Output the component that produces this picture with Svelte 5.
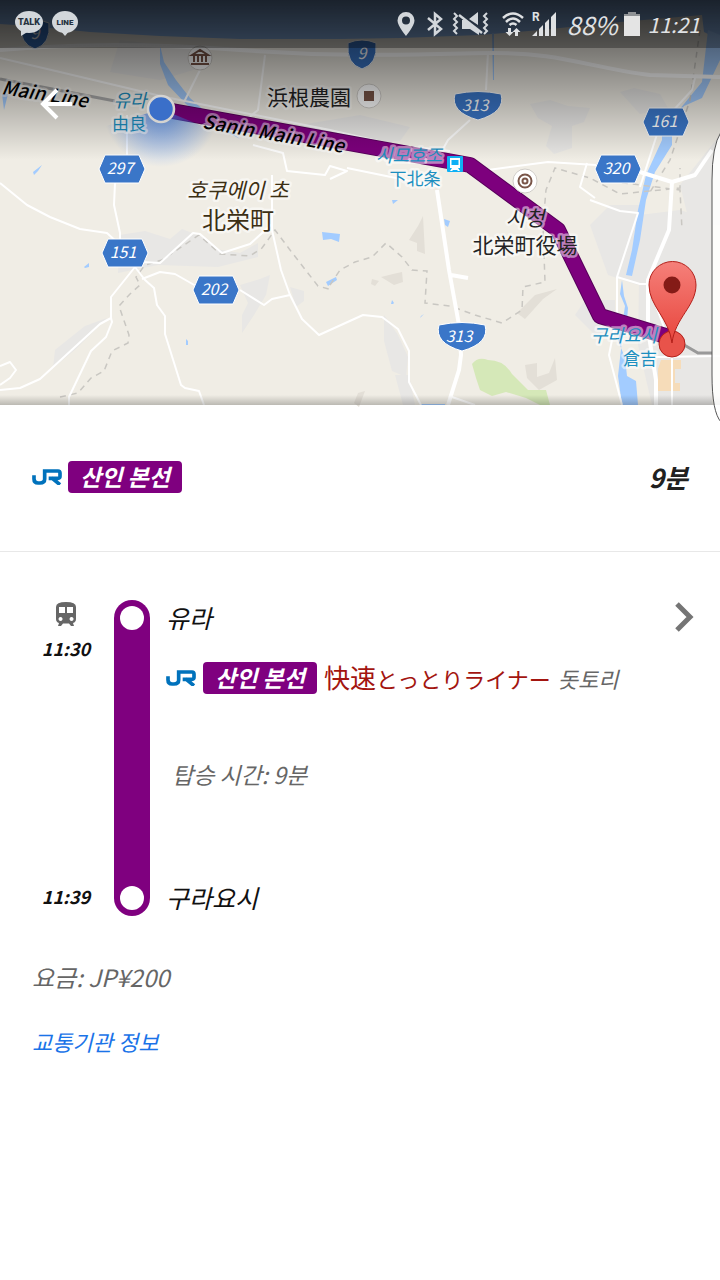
<script>
	const trip = {
		line: '산인 본선',
		duration: '9분',
		from: { name: '유라', time: '11:30' },
		to: { name: '구라요시', time: '11:39' },
		kanji: '快速',
		kana: 'とっとりライナー',
		headsign: '돗토리',
		ride: '탑승 시간: 9분',
		fare: '요금: JP¥200'
	};

	const hexShields = [
		{ x: 122, y: 169, n: '297' },
		{ x: 125, y: 253, n: '151' },
		{ x: 216, y: 290, n: '202' },
		{ x: 666, y: 122, n: '161' },
		{ x: 618, y: 169, n: '320' }
	];

	const wideShields = [
		{ x: 478, y: 106, n: '313' },
		{ x: 462, y: 337, n: '313' }
	];

	const routeShields = [
		{ x: 35, y: 34, n: '9' },
		{ x: 362, y: 54, n: '9' }
	];

	const roads = [
		'M0 58 L60 72 L165 97 L330 130 L400 146 L450 151',
		'M200 70 L184 102',
		'M265 55 L258 110 L240 125',
		'M470 120 L448 140 L443 149',
		'M488 52 L486 90',
		'M695 78 L692 90 L660 125 L640 187',
		'M488 170 L548 162 L596 165',
		'M587 163 L580 187 L595 198',
		'M0 183 L27 205 L50 217 L80 229 L107 233 L119 244',
		'M127 115 L127 155 M115 183 L114 205 L120 233 V242',
		'M135 267 L111 297 L111 318 L100 324 L40 379 L20 388 L0 390',
		'M0 366 L10 362 L16 370 L10 378 L0 385',
		'M111 318 L112 322 L106 337 L91 351 L69 397 V405',
		'M135 267 L145 280 L154 288 L157 305 L165 316 L165 334 L181 385 L185 388 L199 391 L204 405',
		'M142 279 L160 272 L175 274 L196 286',
		'M142 262 L160 263 L193 233 L200 234 L222 253 L250 244 L272 224',
		'M272 175 L272 230 L281 270 L290 295 L302 319 L319 335 L363 315 L382 317 L398 329 L409 351 L409 382 L421 405',
		'M240 290 L264 305 L272 299 L290 295',
		'M253 145 L283 153 L287 171 L325 175 L330 166 L347 171 L330 179 M347 168 L440 187',
		'M590 200 L620 211 L638 213 L617 277 L617 315 L609 355 L622 405',
		'M617 277 L640 284 L648 284 L665 330 L672 350 L672 405 M655 357 L720 356',
		'M449 396 L475 405'
	];

	const mainRoads = [
		'M0 50 C60 45 130 42 240 50 S420 54 490 53 S590 68 650 75 L720 77',
		'M437 190 L449 270 L459 325 L461 355 L459 370 L448 405 M451 275 L468 278',
		'M640 172 L672 182 L695 175 L712 150',
		'M672 182 L669 230 L648 280 L648 330 L656 380 V405'
	];

	const borders = [
		'M60 397 L78 393 L91 378 L104 371 L112 351 L128 343 L129 335 L119 306 L130 294 L140 285 L136 277 L145 265 L162 260 L199 235 L220 254 L250 256 L262 248 L275 230 L290 250 L318 286 L332 290 M330 285 L340 270 L355 262 L372 257 L386 243 L402 257 L412 270 L427 271 L425 303 L450 306 L475 315 L502 323 L522 310 L523 287 L545 282 L543 225 L546 190 L555 168 L590 178 L620 194 L680 188 L680 168',
		'M700 30 L690 100 L670 160 L650 192 M600 180 L680 190 L682 230'
	];

	const patches = [
		'M120 40 l70 8 10 20 -40 12 -50 -8 z',
		'M300 125 l60 -10 50 12 -10 14 -70 6 z',
		'M530 104 l20 -4 18 6 22 2 -6 14 -12 4 0 22 -18 6 -8 -8 6 -20 -14 -8 z',
		'M620 92 l14 -4 26 6 8 14 -28 6 z',
		'M120 235 l25 -4 25 8 12 -10 20 8 14 12 24 4 18 -10 0 14 -40 10 -60 -2 -40 8 z',
		'M55 350 l30 -24 22 -8 -30 30 -24 20 z',
		'M240 285 l20 -6 10 -4 -4 20 -12 20 -12 18 0 -18 6 -12 z',
		'M290 287 l14 4 0 10 -8 6 z',
		'M384 315 l14 20 10 22 -2 20 -14 -6 -8 -30 z',
		'M395 375 l14 0 6 30 -12 0 z',
		'M590 225 l20 -20 30 0 10 40 -12 40 -30 -10 z',
		'M640 215 l40 -5 32 10 0 185 -60 0 -14 -60 z',
		'M575 315 l10 -15 30 0 0 30 -20 5 z',
		'M680 185 l40 -50 0 90 -30 0 z'
	];

	const hills = [
		'M423 216 l2 38 -8 -3 0 -8 -8 -3 9 -14 z',
		'M381 277 l12 -3 9 -2 1 10 -9 3 z M372 279 l7 2 -4 5 -4 -2 z',
		'M358 393 l7 -2 -6 16 -5 -4 z',
		'M517 313 l18 -18 22 -6 -14 10 -18 20 z',
		'M525 365 l12 -2 0 14 12 -4 6 -15 2 22 -18 10 -12 -12 z'
	];

	const water = [
		'M160 45 L164 62 L176 80 L190 98 L215 120 L240 139 L212 124 L186 104 L168 85 L160 64 z',
		'M322 232 l18 2 -1 8 -8 -3 -8 1 z',
		'M326 282 l10 -5 1 3 -9 6 z',
		'M392 300 l2 3 -1 1 -2 0 z M421 316 l3 -2 -4 4 z M392 200 l6 0 -5 4 z M444 219 l6 2 -2 6 -3 -2 z',
		'M84 267 l5 -4 0 4 -4 1 z M33 172 l9 -7 -4 6 -4 4 z M186 339 l2 2 0 4 -2 0 z',
		'M2 94 l6 0 -4 16 z M492 33 h2 v47 h-1 z',
		'M708 30 L720 35 V60 L702 98 L684 106 L672 124 L672 145 L655 172 L646 200 L640 240 L632 276 L626 275 L632 250 L638 210 L646 175 L662 140 L662 130 L684 104 L702 82 z',
		'M622 280 l2 16 4 12 -1 12 -5 20 -4 36 4 29 16 0 -2 -24 -9 -5 -2 -18 -7 -18 5 -20 2 -14 -5 -12 z',
		'M421 404 h24 v1 h-24 z'
	];
</script>

<main>
	<header class="map">
		<svg class="canvas" viewBox="0 0 720 405" role="img" aria-label="산인 본선 지도">
			<defs>
				<linearGradient id="shade" x1="0" y1="0" x2="0" y2="1">
					<stop offset="0" stop-color="#000" stop-opacity=".74" />
					<stop offset=".3" stop-color="#000" stop-opacity=".5" />
					<stop offset=".65" stop-color="#000" stop-opacity=".25" />
					<stop offset="1" stop-color="#000" stop-opacity="0" />
				</linearGradient>
				<linearGradient id="foot" x1="0" y1="0" x2="0" y2="1">
					<stop offset="0" stop-color="#000" stop-opacity="0" />
					<stop offset="1" stop-color="#000" stop-opacity=".22" />
				</linearGradient>
				<linearGradient id="pin" x1="0" y1="0" x2="0" y2="1">
					<stop offset="0" stop-color="#f5807a" />
					<stop offset="1" stop-color="#e8453c" />
				</linearGradient>
				<radialGradient id="beam" gradientUnits="userSpaceOnUse" cx="161" cy="109" r="58">
					<stop offset="0" stop-color="#4285f4" stop-opacity=".8" />
					<stop offset=".5" stop-color="#4285f4" stop-opacity=".4" />
					<stop offset="1" stop-color="#4285f4" stop-opacity="0" />
				</radialGradient>
			</defs>

			<rect width="720" height="405" fill="#f0ede5" />
			{#each patches as d}
				<path {d} fill="#e8e7e5" />
			{/each}
			{#each hills as d}
				<path {d} fill="#e3dfd7" />
			{/each}
			<path
				d="M472 364 q6 -8 16 -4 q16 0 24 14 l16 16 18 0 4 15 h-10 l-14 -7 -20 -6 -14 4 -12 -6 -4 -12 z"
				fill="#d5e8b8"
			/>
			<path d="M661 360 h20 v9 h-6 v14 h5 v8 h-22 v-22 z" fill="#f6dcb9" />
			<path
				d="M0 0 H720 V40 L704 32 L702 15 L620 22 L540 30 L480 35 L400 38 L340 39 L240 39 L160 36 L90 32 L60 29 L30 26 L0 24 z"
				fill="#92bdf5"
			/>
			{#each water as d}
				<path {d} fill="#a3ccff" />
			{/each}
			{#each borders as d}
				<path {d} class="border" />
			{/each}
			{#each roads as d}
				<path {d} class="road" />
			{/each}
			{#each mainRoads as d}
				<path {d} class="road wide" />
			{/each}

			<path d="M0 79 L115 101" stroke="#aaa" stroke-width="3" />
			<path d="M672 340 L686 346 L698 353 H712" class="rail" />
			<path d="M161 109 L470 165 L558 230 L600 316 L672 338" class="route edge" />
			<path d="M161 109 L470 165 L558 230 L600 316 L672 338" class="route" />

			<g class="poi">
				<circle cx="200" cy="58" r="12" />
				<circle cx="369" cy="96" r="12" />
				<circle cx="525" cy="181" r="12" />
			</g>
			<g stroke="#795548" fill="none" stroke-width="2">
				<path d="M192 55 L200 50 L208 55 z M194 56 V62 M198 56 V62 M202 56 V62 M206 56 V62 M191 64 H209" />
				<circle cx="525" cy="181" r="6.5" />
				<circle cx="525" cy="181" r="2.5" />
			</g>
			<rect x="364" y="91" width="10" height="10" fill="#795548" />

			<path d="M161 109 L100 128 L120 170 H220 L212 130 z" fill="url(#beam)" />

			{#each hexShields as s}
				<path
					d="M{s.x - 17} {s.y - 14} h34 l6 14 -6 14 h-34 l-6 -14 z"
					class="shield"
				/>
				<text x={s.x - 2} y={s.y + 5} class="num">{s.n}</text>
			{/each}
			{#each wideShields as s}
				<path
					d="M{s.x - 23} {s.y - 12} Q{s.x} {s.y - 17} {s.x + 23} {s.y - 12} Q{s.x + 28} {s.y + 6} {s.x} {s.y + 14} Q{s.x - 28} {s.y + 6} {s.x - 23} {s.y - 12} z"
					class="shield"
				/>
				<text x={s.x - 3} y={s.y + 5} class="num">{s.n}</text>
			{/each}
			{#each routeShields as s}
				<path
					d="M{s.x - 14} {s.y - 11} Q{s.x} {s.y - 17} {s.x + 14} {s.y - 11} Q{s.x + 16} {s.y + 10} {s.x} {s.y + 15} Q{s.x - 16} {s.y + 10} {s.x - 14} {s.y - 11} z"
					class="shield"
				/>
				<text x={s.x} y={s.y + 5} class="num">{s.n}</text>
			{/each}

			<text x="1" y="94" class="label slant name" transform="rotate(9 1 94)">Main Line</text>
			<text x="202" y="128" class="label slant name" transform="rotate(10 202 128)">Sanin Main Line</text>
			<text x="130" y="107" class="label slant station" text-anchor="middle">유라</text>
			<text x="129" y="130" class="label station small" text-anchor="middle">由良</text>
			<text x="309" y="105" class="label" text-anchor="middle">浜根農園</text>
			<text x="409" y="162" class="label slant station" text-anchor="middle">시모호조</text>
			<text x="415" y="185" class="label station small" text-anchor="middle">下北条</text>
			<text x="238" y="198" class="label slant town" text-anchor="middle">호쿠에이 초</text>
			<text x="238" y="229" class="label town big" text-anchor="middle">北栄町</text>
			<text x="525" y="226" class="label slant" text-anchor="middle">시청</text>
			<text x="525" y="253" class="label" text-anchor="middle">北栄町役場</text>
			<text x="624" y="342" class="label slant station" text-anchor="middle">구라요시</text>
			<text x="640" y="365" class="label station small" text-anchor="middle">倉吉</text>

			<rect x="447" y="156" width="16" height="16" rx="1" fill="#0fb0f5" />
			<path
				d="M450 158 h10 v10 h-10 z M451.500 160 v5 h7 v-5 z M450 171 l2 -3 h6 l2 3 h-2 l-1 -1 h-4 l-1 1 z"
				fill="#fff"
				fill-rule="evenodd"
			/>

			<rect width="720" height="160" fill="url(#shade)" />
			<rect y="395" width="720" height="10" fill="url(#foot)" />

			<circle cx="161" cy="109" r="13" fill="#3a6fc9" stroke="#d5d3d0" stroke-width="2.500" />
			<circle cx="672" cy="344" r="13" fill="#e8534a" stroke="#b3201a" />
			<path
				d="M672 343 C669 318 649 306 649 285 A23.500 23.500 0 0 1 696 285 C696 306 675 318 672 343 z"
				fill="url(#pin)"
				stroke="#b3201a"
			/>
			<circle cx="672" cy="285" r="8.500" fill="#841b17" />
			<path d="M721 132 Q712 146 712 180 V375 Q712 412 721 422 z" fill="#fff" fill-opacity=".85" stroke="#555" />
		</svg>

		<div class="status">
			<svg width="66" height="28" viewBox="0 0 66 28" aria-hidden="true">
				<g fill="#d3d7db">
					<ellipse cx="14" cy="12" rx="14" ry="11" />
					<path d="M6 18 L6 26 L14 21 z" />
					<ellipse cx="50" cy="12" rx="13" ry="11" />
					<path d="M45 20 L50 26 L55 20 z" />
				</g>
				<text x="14" y="15" class="bubble">TALK</text>
				<text x="50" y="15" class="bubble line">LINE</text>
			</svg>

			<div class="tray">
				<svg width="18" height="26" viewBox="0 0 18 26" aria-hidden="true">
					<path
						d="M9 1 A8.500 8.500 0 0 0 .5 9.500 C.5 15 9 25 9 25 S17.500 15 17.500 9.500 A8.500 8.500 0 0 0 9 1 z M9 5.500 a4 4 0 1 1 0 8 a4 4 0 0 1 0 -8 z"
						fill="#d3d7db"
						fill-rule="evenodd"
					/>
				</svg>
				<svg class="bt" width="16" height="26" viewBox="0 0 16 26" aria-hidden="true">
					<path d="M1 7 L14 18 L8 23 V3 L14 8 L1 19" fill="none" stroke="#d3d7db" stroke-width="2.500" />
				</svg>
				<svg class="mute" width="37" height="26" viewBox="0 0 37 26" aria-hidden="true">
					<path
						d="M2 2 L5 5 L2 8 L5 11 L2 14 L5 17 L2 20 L5 23 M35 2 L32 5 L35 8 L32 11 L35 14 L32 17 L35 20 L32 23"
						fill="none"
						stroke="#d3d7db"
						stroke-width="2"
					/>
					<path d="M10 9 H14 L27 19 V24 L18 18 H10 z M17 8 L26 1 V14 z" fill="#d3d7db" />
					<path d="M7 4 L30 22" stroke="#d3d7db" stroke-width="2.500" />
				</svg>
				<svg class="wifi" width="22" height="26" viewBox="0 0 22 26" aria-hidden="true">
					<path
						d="M1 7 Q11 -2 21 7 M4 11 Q11 4 18 11 M7.500 14 Q11 11 14.500 14"
						fill="none"
						stroke="#dfe1e3"
						stroke-width="2.500"
					/>
					<path
						d="M6 17 h3 v4 h2.500 l-4 4 -4 -4 H6 z M13 25 v-4 h-2.500 l4 -4 4 4 H16 v4 z"
						fill="#dfe1e3"
					/>
				</svg>
				<svg width="25" height="26" viewBox="0 0 25 26" aria-hidden="true">
					<path d="M0 25 L5 20 V25 z M7 25 V18 L11 14 V25 z M13 25 V12 L17 8 V25 z M19 25 V6 L24 1 V25 z" fill="#dfe1e3" />
					<text x="0" y="10" class="roam">R</text>
				</svg>
				<span class="level">88%</span>
				<svg class="battery" width="16" height="24" viewBox="0 0 16 24" aria-hidden="true">
					<path d="M4 0 h8 v2 h4 v3 H0 V2 h4 z" fill="#8f9295" />
					<path d="M0 4 h16 v20 H0 z" fill="#e4e4e4" />
				</svg>
				<time class="clock">11:21</time>
			</div>
		</div>

		<button class="back" aria-label="뒤로">
			<svg width="32" height="32" viewBox="0 0 32 32" aria-hidden="true">
				<path d="M32 16 H3 M17 2 L3 16 L17 30" fill="none" stroke="#fff" stroke-width="4" />
			</svg>
		</button>
	</header>

	{#snippet jr()}
		<svg class="jr" width="30" height="16" viewBox="0 0 90 48" role="img" aria-label="JR">
			<path
				d="M6 19 V30 Q6 42 18 42 H24 Q38 42 38 30 V6 H78 Q84 6 84 12 V22 Q84 28 78 28 H50 M58 26 L84 47"
				fill="none"
				stroke="#0072bc"
				stroke-width="11"
			/>
		</svg>
	{/snippet}

	<section class="summary">
		{@render jr()}
		<span class="chip">{trip.line}</span>
		<strong class="duration">{trip.duration}</strong>
	</section>

	<section class="trip">
		<div class="leg">
			<div class="times">
				<div class="depart">
					<svg width="22" height="24" viewBox="0 0 22 24" aria-hidden="true">
						<path
							d="M1 5 Q1 0 11 0 T21 5 V17 Q21 20 18 21 L19 24 H16 L14 21.500 H8 L6 24 H3 L4 21 Q1 20 1 17 z M4 5 V11 H10 V5 z M12 5 V11 H18 V5 z M5.500 15 a2 2 0 1 0 .1 0 z M16.500 15 a2 2 0 1 0 .1 0 z"
							fill="#666"
							fill-rule="evenodd"
						/>
					</svg>
					<time>{trip.from.time}</time>
				</div>
				<time>{trip.to.time}</time>
			</div>
			<div class="bar">
				<span class="dot"></span>
				<span class="dot"></span>
			</div>
			<div class="detail">
				<div class="stop">{trip.from.name}</div>
				<div class="service">
					{@render jr()}
					<span class="chip">{trip.line}</span>
					<span class="train" lang="ja"><span class="kanji">{trip.kanji}</span>{trip.kana}</span>
					<span class="headsign">{trip.headsign}</span>
				</div>
				<div class="ride">{trip.ride}</div>
				<div class="stop">{trip.to.name}</div>
			</div>
			<button class="more" aria-label="자세히">
				<svg width="20" height="30" viewBox="0 0 20 30" aria-hidden="true">
					<path d="M3 2 L16 15 L3 28" fill="none" stroke="#757575" stroke-width="5" />
				</svg>
			</button>
		</div>

		<p class="fare">{trip.fare}</p>
		<a class="agency" href="#agency">교통기관 정보</a>
	</section>
</main>

<style>
	:global(body) {
		margin: 0;
		background: #fff;
	}

	main {
		font-family: "Noto Sans CJK KR", "Noto Sans CJK JP", sans-serif;
		color: #212121;
		font-size: 24px;
		line-height: 32px;
		overflow-x: hidden;
	}

	button {
		background: none;
		border: 0;
		padding: 0;
		cursor: pointer;
	}
	svg {
		display: block;
		flex: none;
	}

	/* map */
	.map {
		position: relative;
	}
	.canvas {
		width: 100%;
		height: auto;
		overflow: visible;
	}
	.road {
		fill: none;
		stroke: #fff;
		stroke-width: 2;
		stroke-linejoin: round;
	}
	.road.wide {
		stroke-width: 4;
	}
	.border {
		fill: none;
		stroke: #c9c7c2;
		stroke-width: 1.5;
		stroke-dasharray: 6 5;
	}
	.rail {
		fill: none;
		stroke: #999;
		stroke-width: 3;
	}
	.route {
		fill: none;
		stroke: #7d007d;
		stroke-width: 14;
		stroke-linejoin: round;
	}
	.route.edge {
		stroke: #57005a;
		stroke-width: 16;
	}
	.poi circle {
		fill: #fff;
		stroke: #d0cdc8;
	}
	.shield {
		fill: #3a76c8;
		stroke: #fff;
		stroke-width: 1;
	}
	.num {
		fill: #fff;
		font-size: 16px;
		font-style: italic;
		text-anchor: middle;
	}
	.label {
		font-size: 21px;
		fill: #222;
		stroke: #fff;
		stroke-opacity: .5;
		stroke-width: 5;
		stroke-linejoin: round;
		paint-order: stroke;
	}
	.label.slant {
		font-style: italic;
	}
	.label.name {
		font-size: 19px;
		font-weight: 500;
		fill: #000;
	}
	.label.station {
		font-size: 18px;
		fill: #1c8fc0;
	}
	.label.small {
		font-size: 17px;
	}
	.label.town {
		fill: #3c2f14;
	}
	.label.big {
		font-size: 24px;
	}

	.status {
		position: absolute;
		top: 0;
		left: 0;
		right: 0;
		height: 48px;
		padding: 0 20px 0 15px;
		display: flex;
		align-items: center;
		justify-content: space-between;
		background: rgba(0, 0, 0, .3);
	}
	.bubble {
		fill: #26323f;
		font-family: Roboto, sans-serif;
		font-size: 9px;
		font-weight: 900;
		text-anchor: middle;
	}
	.bubble.line {
		font-size: 8px;
	}
	.tray {
		display: flex;
		align-items: center;
		color: #e0e2e4;
		font-style: italic;
	}
	.bt {
		margin-left: 12px;
	}
	.mute {
		margin-left: 9px;
	}
	.wifi {
		margin: 0 8px 0 13px;
	}
	.roam {
		fill: #dfe1e3;
		font-family: Roboto, sans-serif;
		font-style: normal;
		font-size: 12px;
		font-weight: 700;
	}
	.level {
		margin-left: 10px;
		font-size: 25px;
	}
	.battery {
		margin: 0 8px 0 6px;
	}
	.clock {
		font-size: 21px;
	}
	.back {
		position: absolute;
		top: 88px;
		left: 40px;
	}

	/* summary */
	.summary {
		display: flex;
		align-items: center;
		gap: 6px;
		padding: 56px 32px 58px;
		border-bottom: 1px solid #e8e8e8;
	}
	.chip {
		padding: 0 12px 2px;
		border-radius: 4px;
		background: #7f007f;
		color: #fff;
		font-size: 23px;
		font-weight: 700;
		font-style: italic;
		line-height: 30px;
		white-space: nowrap;
	}
	.duration {
		margin-left: auto;
		font-size: 26px;
		font-style: italic;
	}

	/* trip */
	.trip {
		padding: 48px 26px 48px 32px;
	}
	.leg {
		display: flex;
	}
	.times {
		width: 68px;
		display: flex;
		flex-direction: column;
		align-items: center;
		justify-content: space-between;
		padding: 2px 0 8px;
	}
	.times time {
		font-size: 18px;
		font-weight: 700;
		font-style: italic;
		line-height: 24px;
		color: #111;
	}
	.depart {
		display: flex;
		flex-direction: column;
		align-items: center;
		gap: 10px;
	}
	.bar {
		width: 24px;
		margin: 0 16px 0 14px;
		padding: 6px;
		border-radius: 18px;
		background: #7f007f;
		display: flex;
		flex-direction: column;
		justify-content: space-between;
	}
	.dot {
		height: 24px;
		border-radius: 50%;
		background: #fff;
	}
	.detail {
		flex: 1;
		min-width: 0;
	}
	.stop {
		font-size: 25px;
		font-style: italic;
		line-height: 34px;
		padding-bottom: 2px;
		color: #111;
	}
	.service {
		display: flex;
		align-items: center;
		gap: 7px;
		height: 32px;
		margin: 26px 0 64px;
		white-space: nowrap;
	}
	.train {
		color: #a31510;
		font-family: "Noto Sans CJK JP", sans-serif;
		font-size: 22px;
	}
	.kanji {
		font-size: 26px;
		line-height: 26px;
	}
	.headsign {
		color: #666;
		font-size: 22px;
		font-style: italic;
	}
	.ride {
		margin: 0 0 90px 6px;
		color: #666;
		font-size: 23px;
		font-style: italic;
	}
	.more {
		align-self: flex-start;
		margin-top: 2px;
	}
	.fare {
		margin: 45px 0 32px;
		color: #666;
		font-style: italic;
	}
	.agency {
		color: #1a73e8;
		font-size: 22px;
		font-style: italic;
		text-decoration: none;
	}
</style>
